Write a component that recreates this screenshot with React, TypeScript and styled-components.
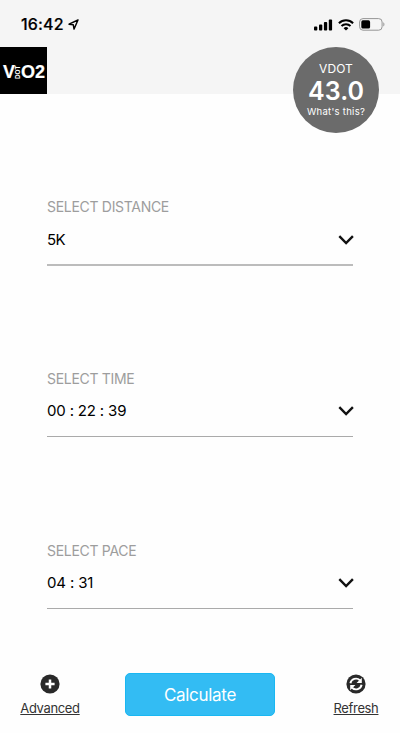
import React from "react";
import styled, { createGlobalStyle } from "styled-components";

const GlobalStyle = createGlobalStyle`
  * { box-sizing: border-box; }
  body { margin: 0; background: #fefefe; font-family: Inter, "Liberation Sans", sans-serif; }
`;

const Screen = styled.div`
  display: flex;
  flex-direction: column;
  width: 400px;
  height: 733px;
  overflow: hidden;
  background: #fefefe;
  color: #000;
`;

const Header = styled.header`
  height: 94px;
  flex: none;
  background: #f5f5f5;
`;

const StatusBar = styled.div`
  display: flex;
  align-items: center;
  justify-content: space-between;
  height: 47px;
  padding: 2px 15px 0 21px;
`;

const Clock = styled.div`
  display: flex;
  align-items: center;
  gap: 4px;
  font-size: 16px;
  line-height: 20px;
  font-weight: 500;
  -webkit-text-stroke: 0.2px #000;
  letter-spacing: 0.15px;
  padding-bottom: 1px;
`;

const StatusIcons = styled.div`
  display: flex;
  align-items: center;
  gap: 5px;
  svg { display: block; }
`;

const Brand = styled.div`
  display: flex;
  justify-content: space-between;
  padding-right: 21px;
`;

const Logo = styled.div`
  display: flex;
  align-items: center;
  justify-content: center;
  width: 47px;
  height: 47px;
  padding: 3px 0 0 1px;
  background: #000;
  color: #fff;
  font: bold 18px/20px "Liberation Sans", sans-serif;
  -webkit-text-stroke: 0.2px #fff;
`;

const LogoSmall = styled.span`
  width: 6px;
  height: 14px;
  font-size: 6.4px;
  line-height: 6px;
  text-align: center;
  writing-mode: vertical-rl;
  transform: rotate(180deg);
  -webkit-text-stroke: 0;
`;

const Score = styled.div`
  display: flex;
  flex-direction: column;
  align-items: center;
  width: 86px;
  height: 86px;
  padding-top: 14px;
  border-radius: 50%;
  background: #6b6b6b;
  color: #fff;
`;

const ScoreTitle = styled.span`
  font-size: 12px;
  line-height: 16px;
  letter-spacing: 0.1px;
`;

const ScoreValue = styled.strong`
  font-size: 25px;
  line-height: 28px;
  font-weight: 600;
  letter-spacing: 0.1px;
`;

const ScoreHint = styled.span`
  font-size: 9.5px;
  line-height: 14px;
  letter-spacing: 0.28px;
  white-space: nowrap;
`;

const Form = styled.main`
  display: flex;
  flex-direction: column;
  gap: 104px;
  padding: 104px 47px 0;
  flex: 1;
`;

const Field = styled.section<{ $line: number }>`
  height: ${(p) => (p.$line > 1 ? 68 : 67)}px;
  flex: none;
  border-bottom: ${(p) => p.$line}px solid ${(p) => (p.$line > 1 ? "#bcbcbc" : "#aaa")};
  & + &:last-child { margin-top: 1px; }
`;

const Label = styled.div`
  font-size: 14px;
  line-height: 18px;
  letter-spacing: -0.3px;
  color: #9d9d9d;
`;

const Selection = styled.div<{ $gap: number }>`
  display: flex;
  align-items: center;
  justify-content: space-between;
  margin: ${(p) => p.$gap}px -1px 0 0;
  font-size: 15px;
  line-height: 20px;
  svg { display: block; }
`;

const Value = styled.span<{ $spacing: number }>`
  letter-spacing: ${(p) => p.$spacing}px;
`;

const Footer = styled.footer`
  display: grid;
  grid-template-columns: 100px 1fr 88px;
  height: 60px;
  flex: none;
`;

const Action = styled.button`
  display: flex;
  flex-direction: column;
  align-items: center;
  gap: 5px;
  border: 0;
  padding: 1px 0 0;
  background: none;
  color: #333;
  font: 400 13px/18px Inter, sans-serif;
  text-decoration: underline;
  text-decoration-thickness: 1px;
  text-underline-offset: 1px;
  letter-spacing: -0.35px;
  svg { display: block; }
`;

const Calculate = styled.button`
  justify-self: start;
  width: 150px;
  height: 43px;
  margin-left: 25px;
  padding: 0;
  border: 1px solid #19b7f2;
  border-radius: 5px;
  background: #33bcf3;
  color: #fff;
  font: 400 17px/22px Inter, sans-serif;
  letter-spacing: -0.3px;
`;

const Chevron = () => (
  <svg width="16" height="10" viewBox="0 0 16 10" fill="none">
    <path d="M1.3 1.2 8.1 8l6.8-6.8" stroke="#111" strokeWidth="2.4" />
  </svg>
);

const fields = [
  { label: "SELECT DISTANCE", value: "5K", spacing: -0.5, line: 2, gap: 14 },
  { label: "SELECT TIME", value: "00 : 22 : 39", spacing: -0.17, line: 1, gap: 13 },
  { label: "SELECT PACE", value: "04 : 31", spacing: -0.15, line: 1, gap: 13 },
];

export default function App() {
  return (
    <Screen>
      <GlobalStyle />
      <Header>
        <StatusBar>
          <Clock>
            16:42
            <svg width="11" height="11" viewBox="0 0 11 11" fill="none">
              <path d="M10 1 1 5.2l4.3.6.7 4.3Z" stroke="#000" strokeWidth="1.4" strokeLinejoin="round" />
            </svg>
          </Clock>
          <StatusIcons>
            <svg width="19" height="12" viewBox="0 0 19 12">
              <rect x="0" y="7.5" width="3.3" height="4" rx="0.9" />
              <rect x="5" y="5.5" width="3.3" height="6" rx="0.9" />
              <rect x="9.9" y="3" width="3.3" height="8.5" rx="0.9" />
              <rect x="14.8" y="0.5" width="3.3" height="11" rx="0.9" />
            </svg>
            <svg width="16" height="12" viewBox="0 0 16 12" fill="none" stroke="#000">
              <path d="M.9 4.2a10.1 10.1 0 0 1 14.2 0" strokeWidth="2" />
              <path d="M3.5 7a6.4 6.4 0 0 1 9 0" strokeWidth="2" />
              <path d="M5.6 9.2a3.4 3.4 0 0 1 4.8 0L8 11.6Z" fill="#000" stroke="none" />
            </svg>
            <svg width="26" height="13" viewBox="0 0 26 13">
              <rect x="0.6" y="0.6" width="22.5" height="11.6" rx="3.4" fill="none" stroke="#969696" />
              <rect x="2.3" y="2.3" width="8.8" height="8.2" rx="1.6" />
              <path d="M24.3 4.3c1.5.6 1.5 3.6 0 4.2Z" fill="#969696" />
            </svg>
          </StatusIcons>
        </StatusBar>
        <Brand>
          <Logo>V<LogoSmall>DOT</LogoSmall>O2</Logo>
          <Score>
            <ScoreTitle>VDOT</ScoreTitle>
            <ScoreValue>43.0</ScoreValue>
            <ScoreHint>What's this?</ScoreHint>
          </Score>
        </Brand>
      </Header>
      <Form>
        {fields.map((f) => (
          <Field key={f.label} $line={f.line}>
            <Label>{f.label}</Label>
            <Selection $gap={f.gap}>
              <Value $spacing={f.spacing}>{f.value}</Value>
              <Chevron />
            </Selection>
          </Field>
        ))}
      </Form>
      <Footer>
        <Action>
          <svg width="20" height="20" viewBox="0 0 20 20">
            <circle cx="10" cy="10" r="9.6" fill="#292929" />
            <path d="M10 5.4v9.2M5.4 10h9.2" stroke="#fff" strokeWidth="2.5" />
          </svg>
          Advanced
        </Action>
        <Calculate>Calculate</Calculate>
        <Action>
          <svg width="20" height="20" viewBox="0 0 20 20">
            <circle cx="10" cy="10" r="9.6" fill="#292929" />
            <path d="M4.4 9.3a5.7 5.7 0 0 1 9.5-3.1M15.6 10.7a5.7 5.7 0 0 1-9.5 3.1" fill="none" stroke="#fff" strokeWidth="1.9" />
            <path d="M15.8 3.7v5.2h-5.2ZM4.2 16.3v-5.2h5.2Z" fill="#fff" />
          </svg>
          Refresh
        </Action>
      </Footer>
    </Screen>
  );
}
